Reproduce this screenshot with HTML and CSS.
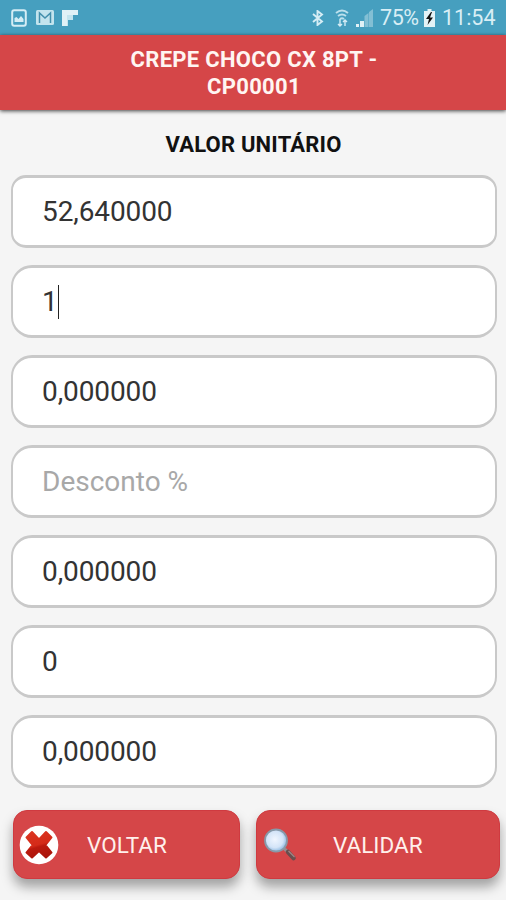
FILE: index.html
```html
<!DOCTYPE html>
<html lang="pt-BR">
<head>
<meta charset="utf-8">
<title>Valor unitário</title>
<link rel="stylesheet" href="styles.css">
</head>
<body>
<div class="status">
  <div class="notifications">
    <svg width="16" height="18" viewBox="0 0 16 18"><rect x="1.200" y="1.200" width="13.600" height="15.600" rx="2" fill="none" stroke="#d5edf5" stroke-width="2"/><path d="M3.500 13V9l2-1 2 2 2.500-3 2.500 3v3z" fill="#d5edf5"/></svg>
    <svg width="18" height="15" viewBox="0 0 18 15"><rect width="18" height="15" rx="1.500" fill="#c3e4ee"/><path d="M3.500 13V3L9 8l5.500-5v10" fill="none" stroke="#438fac" stroke-width="1.500"/></svg>
    <svg width="16" height="16" viewBox="0 0 16 16"><path d="M0 0H16V5H11V10H6V16H0z" fill="#c3e4ee"/><path d="M0 0H16V5H5V16H0z" fill="#e0f1f6"/></svg>
  </div>
  <div class="system">
    <svg class="bluetooth" width="12" height="16" viewBox="0 0 12 16"><path d="M1 4l9 7.500L5.500 15V1L10 4.500 1 12" fill="none" stroke="#d5edf5" stroke-width="1.900"/></svg>
    <svg class="wifi" width="14" height="18" viewBox="0 0 14 18"><path d="M1 4Q7-1 13 4M3 7q4-3 8 0M5 10q2-1.500 4 0" fill="none" stroke="#bce0ec" stroke-width="1.900"/><path d="M5 10v7M3 15l2 2 2-2M10 17v-6M8 13l2-2 2 2" fill="none" stroke="#d5edf5" stroke-width="1.400"/></svg>
    <svg class="signal" width="17" height="18" viewBox="0 0 17 18"><path d="M0 18V15h3v3zM4 18v-6h4v6z" fill="#e0f1f6"/><path d="M8.500 18V7l4-3v14zM13 18V3l4-3v18z" fill="#83bfd4"/></svg>
    <span class="percent">75%</span>
    <svg class="battery" width="11" height="18" viewBox="0 0 11 18"><path d="M3.500 0h4v2H11v16H0V2h3.500z" fill="#e3f2f6"/><path d="M7 3L2 10h3l-1.500 6L9 8.500H6L8 3z" fill="#111"/></svg>
    <span class="clock">11:54</span>
  </div>
</div>
<header class="header">CREPE CHOCO CX 8PT -<br>CP00001</header>
<main class="content">
  <h1 class="title">VALOR UNITÁRIO</h1>
  <div class="fields">
    <div class="field first"><span>52,640000</span></div>
    <div class="field"><span>1</span><i class="caret"></i></div>
    <div class="field"><span>0,000000</span></div>
    <div class="field placeholder"><span>Desconto %</span></div>
    <div class="field"><span>0,000000</span></div>
    <div class="field"><span>0</span></div>
    <div class="field"><span>0,000000</span></div>
  </div>
  <div class="actions">
    <div class="button back">
      <svg width="40" height="40" viewBox="0 0 40 40">
        <defs><linearGradient id="cross" gradientUnits="userSpaceOnUse" x1="14" y1="6" x2="22" y2="34"><stop stop-color="#dc3521"/><stop offset=".5" stop-color="#d42a18"/><stop offset=".58" stop-color="#bb1a0e"/><stop offset="1" stop-color="#a81309"/></linearGradient></defs>
        <circle cx="20" cy="20" r="19.300" fill="#fff"/>
        <path d="M13 7L20 14.500 27 7 32.500 12.500 26.500 20 32.500 27.500 27 32.500 20 26 13 32.500 7.500 27.500 13.500 20 7.500 12.500z" fill="url(#cross)" stroke="url(#cross)" stroke-width="2" stroke-linejoin="round"/>
      </svg>
      <span class="label">VOLTAR</span>
    </div>
    <div class="button validate">
      <svg width="34" height="34" viewBox="0 0 34 34">
        <defs><radialGradient id="lens" cx=".45" cy=".45"><stop stop-color="#f0f6ff"/><stop offset=".75" stop-color="#d3e4f8"/><stop offset="1" stop-color="#a3c6e8"/></radialGradient></defs>
        <path d="M21 20.500l4 3.500" stroke="#9a8b8d" stroke-width="3"/>
        <path d="M25 24l5.500 6" stroke="#684e4e" stroke-width="4.500" stroke-linecap="round"/>
        <path d="M25.500 23l6 6" stroke="#a08585" stroke-width="1.200"/>
        <circle cx="13" cy="12.500" r="11" fill="url(#lens)" stroke="#8799a9" stroke-width="1.800"/>
      </svg>
      <span class="label">VALIDAR</span>
    </div>
  </div>
</main>
</body>
</html>
```
FILE: styles.css
```css
* { box-sizing: border-box; }
body {
  margin: 0;
  height: 900px;
  overflow: hidden;
  background: #f5f5f5;
  font-family: Roboto, "Liberation Sans", sans-serif;
}
svg { display: block; flex: none; }
.status {
  height: 35px;
  padding: 0 10px 0 11px;
  display: flex;
  justify-content: space-between;
  align-items: center;
  background: #469fbf;
  color: #d8eef5;
  font-size: 21.500px;
}
.notifications { display: flex; align-items: center; gap: 9px; }
.notifications svg:last-child { margin-left: -1px; }
.system { display: flex; align-items: center; }
.wifi { margin-left: 11px; }
.signal { margin-left: 7px; }
.percent { width: 40px; margin-left: 7px; letter-spacing: -.4px; }
.battery { margin-left: 4px; }
.clock { width: 54px; margin-left: 7px; white-space: nowrap; }
.header {
  position: relative;
  height: 75px;
  padding-top: 11px;
  padding-left: 2px;
  background: #d54648;
  box-shadow: 0 1px 4px rgba(0, 0, 0, .75);
  color: #fff5f2;
  font-size: 22px;
  letter-spacing: .3px;
  font-weight: 700;
  line-height: 27px;
  text-align: center;
}
.title {
  height: 65px;
  margin: 0;
  padding-top: 22px;
  padding-left: 1px;
  font-size: 22px;
  letter-spacing: .2px;
  font-weight: 700;
  line-height: 26px;
  text-align: center;
  color: #111;
}
.fields {
  display: grid;
  grid-auto-rows: 73px;
  gap: 17px;
  padding: 0 9px 0 11px;
}
.field {
  display: flex;
  align-items: center;
  padding-left: 29px;
  border: solid #c9c9c9;
  border-width: 3px 2px;
  border-radius: 21px;
  background: #fff;
  color: #333;
  font-size: 28px;
  letter-spacing: -.1px;
  font-weight: 400;
}
.first { border-radius: 15px; }
.placeholder { color: #a8a8a8; letter-spacing: 0; }
.caret { width: 1px; height: 34px; background: #222; }
.actions {
  display: flex;
  gap: 16px;
  margin: 22px 6px 0 13px;
}
.button {
  height: 69px;
  display: flex;
  align-items: center;
  border: 1px solid #cf3a40;
  border-radius: 14px;
  background: #d54648;
  box-shadow: 0 8px 12px rgba(0, 0, 0, .34);
  color: #fff0ec;
  font-size: 22.500px;
}
.back { width: 227px; padding-left: 5px; }
.validate { width: 244px; padding-left: 6px; }
.back .label { margin-left: 28px; }
.validate .label { margin-left: 36px; }
```
